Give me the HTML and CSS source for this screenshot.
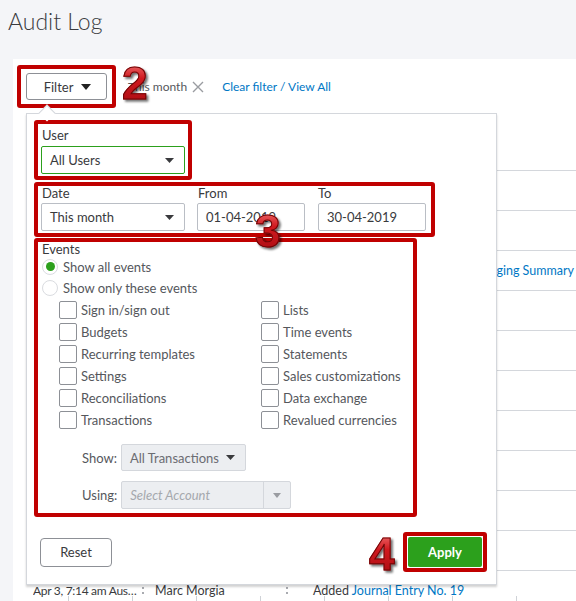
FILE: index.html
```html
<!DOCTYPE html>
<html lang="en">
<head>
<meta charset="utf-8">
<title>Audit Log</title>
<link rel="stylesheet" href="styles.css">
</head>
<body>
<div class="page">
  <header class="header">
    <h1 class="title">Audit Log</h1>
  </header>
  <main class="card">
    <div class="toolbar">
      <div class="mark mark-filter">
        <button class="btn filter-btn">Filter
          <svg class="caret" width="10" height="6" viewBox="0 0 10 6"><polygon points="0,0 10,0 5,6" fill="#222"/></svg>
        </button>
      </div>
      <span class="chip">This month
        <svg class="chip-x" width="12" height="12" viewBox="0 0 12 12"><path d="M1 1 L11 11 M11 1 L1 11" stroke="#9a9ca1" stroke-width="1.4" fill="none"/></svg>
      </span>
      <a class="link clear-link">Clear filter / View All</a>
    </div>

    <div class="table">
      <div class="thead"></div>
      <div class="row"></div>
      <div class="row"></div>
      <div class="row"><div class="cell cell-wide right"><span>Ran report <span class="link">A/R Aging Summary</span></span></div></div>
      <div class="row"></div>
      <div class="row"></div>
      <div class="row"></div>
      <div class="row"></div>
      <div class="row"></div>
      <div class="row"></div>
      <div class="row"></div>
      <div class="row row-last">
        <div class="cell c1"><span class="trunc">Apr 3, 7:14 am Australia/Sydney</span><span class="sep s1"></span></div>
        <div class="cell c2"><span>Marc Morgia</span><span class="sep s2"></span></div>
        <div class="cell c3"><span>Added <span class="link">Journal Entry No. 19</span></span></div>
      </div>
    </div>

    <section class="panel">
      <span class="panel-caret"></span>

      <div class="mark mark-user">
        <div class="label">User</div>
        <div class="select select-green">
          <span>All Users</span>
          <svg class="caret" width="9" height="5" viewBox="0 0 9 5"><polygon points="0,0 9,0 4.5,5" fill="#393a3d"/></svg>
        </div>
      </div>

      <div class="mark mark-date">
        <div class="date-row">
          <div class="field f-date">
            <div class="label">Date</div>
            <div class="select">
              <span>This month</span>
              <svg class="caret" width="9" height="5" viewBox="0 0 9 5"><polygon points="0,0 9,0 4.5,5" fill="#393a3d"/></svg>
            </div>
          </div>
          <div class="field f-from">
            <div class="label">From</div>
            <div class="input">01-04-2019</div>
          </div>
          <div class="field f-to">
            <div class="label">To</div>
            <div class="input">30-04-2019</div>
          </div>
        </div>
      </div>

      <div class="mark mark-events">
        <div class="label events-label">Events</div>
        <div class="radio-row"><span class="radio on"></span><span>Show all events</span></div>
        <div class="radio-row"><span class="radio"></span><span>Show only these events</span></div>
        <div class="checks">
          <div class="check"><span class="box"></span>Sign in/sign out</div>
          <div class="check"><span class="box"></span>Lists</div>
          <div class="check"><span class="box"></span>Budgets</div>
          <div class="check"><span class="box"></span>Time events</div>
          <div class="check"><span class="box"></span>Recurring templates</div>
          <div class="check"><span class="box"></span>Statements</div>
          <div class="check"><span class="box"></span>Settings</div>
          <div class="check"><span class="box"></span>Sales customizations</div>
          <div class="check"><span class="box"></span>Reconciliations</div>
          <div class="check"><span class="box"></span>Data exchange</div>
          <div class="check"><span class="box"></span>Transactions</div>
          <div class="check"><span class="box"></span>Revalued currencies</div>
        </div>
        <div class="opt-row opt-show">
          <span class="opt-label">Show:</span>
          <div class="gselect gs-show">
            <span>All Transactions</span>
            <svg class="caret" width="9" height="5" viewBox="0 0 9 5"><polygon points="0,0 9,0 4.5,5" fill="#393a3d"/></svg>
          </div>
        </div>
        <div class="opt-row opt-using">
          <span class="opt-label">Using:</span>
          <div class="gselect gs-using">
            <span class="placeholder">Select Account</span>
            <span class="gs-btn">
              <svg class="caret" width="8" height="5" viewBox="0 0 8 5"><polygon points="0,0 8,0 4,5" fill="#9a9ca1"/></svg>
            </span>
          </div>
        </div>
      </div>

      <div class="panel-foot">
        <button class="btn reset-btn">Reset</button>
        <div class="mark mark-apply">
          <button class="btn apply-btn">Apply</button>
        </div>
      </div>
    </section>

    <span class="num n2">2</span>
    <span class="num n3">3</span>
    <span class="num n4">4</span>
  </main>
</div>
</body>
</html>
```

FILE: styles.css
```css
html, body {
  margin: 0;
  padding: 0;
}
body {
  background: #f4f5f8;
  font-family: Lato, "Open Sans", sans-serif;
  font-size: 13px;
  color: #393a3d;
  overflow: hidden;
  width: 576px;
  height: 601px;
}
.page {
  display: flex;
  flex-direction: column;
  height: 601px;
}
.header {
  height: 59px;
  box-sizing: border-box;
  padding: 7px 0 0 8px;
}
.title {
  margin: 0;
  font-size: 23px;
  line-height: 28px;
  font-weight: 300;
  color: #393a3d;
}
.card {
  position: relative;
  flex: 1;
  margin-left: 13px;
  background: #fff;
  overflow: hidden;
}

/* annotation boxes */
.mark {
  border: 4px solid #c00000;
  border-radius: 3px;
  box-sizing: border-box;
}

.toolbar {
  display: flex;
  align-items: center;
  padding: 6px 0 0 4px;
  height: 49px;
  box-sizing: border-box;
}
.mark-filter {
  padding: 4px 5px;
}
.btn {
  font-family: inherit;
  font-size: 13px;
  cursor: pointer;
  box-sizing: border-box;
}
.filter-btn {
  width: 81px;
  height: 27px;
  border: 1px solid #8d9096;
  border-radius: 3px;
  background: #fff;
  color: #393a3d;
  display: flex;
  align-items: center;
  justify-content: center;
  gap: 8px;
  padding: 0 0 0 2px;
}
.chip {
  margin-left: 12px;
  display: flex;
  align-items: center;
  gap: 4px;
  font-size: 12px;
  color: #55575c;
}
.chip-x { margin-left: 1px; }
.link { color: #0077c5; text-decoration: none; }
.clear-link { margin-left: 18px; font-size: 12px; }

/* background table */
.table {
  margin-left: 13px;
  font-size: 12.5px;
}
.thead { height: 62px; }
.row {
  height: 40px;
  box-sizing: border-box;
  border-top: 1px solid #d4d7dc;
  display: flex;
  align-items: center;
  padding-left: 7px;
}
.cell { display: flex; align-items: center; white-space: nowrap; }
.cell-wide { flex: 1; }
.right { justify-content: flex-end; padding-right: 2px; }
.c1 { width: 122px; }
.c2 { width: 158px; }
.trunc {
  display: block;
  width: 106px;
  font-size: 12px;
  letter-spacing: -0.3px;
  overflow: hidden;
  text-overflow: ellipsis;
}
.sep {
  margin-left: auto;
  width: 0;
  height: 7px;
  border-left: 2px dotted #a9abb0;
}
.s1 { margin-right: 11px; }
.s2 { margin-right: 25px; }
.row-last {
  align-items: flex-start;
  padding-top: 12px;
  background: repeating-linear-gradient(90deg, transparent 0 42px, #cfd2d7 42px 43px, transparent 43px 64px) 0 25px / 100% 7px no-repeat;
}

/* filter panel */
.panel {
  position: absolute;
  left: 13px;
  top: 54px;
  width: 471px;
  box-sizing: border-box;
  background: #fff;
  border: 1px solid #d4d7dc;
  box-shadow: 0 2px 2px rgba(0, 0, 0, 0.18);
  padding: 6px 0 12px 7px;
  z-index: 2;
}
.panel-caret {
  position: absolute;
  top: -7px;
  left: 14px;
  width: 11px;
  height: 11px;
  background: #fff;
  border-left: 1px solid #d4d7dc;
  border-top: 1px solid #d4d7dc;
  transform: rotate(45deg);
}
.label {
  line-height: 16px;
  color: #393a3d;
}
.mark-user {
  width: 158px;
  padding: 3px 3px 2px 3px;
}
.mark-user .label { padding-left: 1px; margin-bottom: 3px; }
.select, .input {
  height: 28px;
  box-sizing: border-box;
  border: 1px solid #babec5;
  border-radius: 2px;
  display: flex;
  align-items: center;
  justify-content: space-between;
  padding: 0 10px 0 8px;
  color: #393a3d;
}
.select-green { border-color: #2ca01c; width: 144px; }
.mark-date {
  margin-top: 2px;
  width: 401px;
  padding: 0 5px 2px 3px;
}
.date-row {
  display: flex;
}
.field .label { line-height: 14px; margin-bottom: 3px; padding-left: 1px; }
.f-date { width: 144px; }
.f-from { width: 108px; margin-left: 12px; }
.f-to { width: 108px; margin-left: 13px; }
.f-to .label { padding-left: 0; }

.mark-events {
  margin-top: 1px;
  width: 383px;
  padding: 0 0 4px 0;
}
.events-label { line-height: 14px; padding-left: 4px; }
.radio-row {
  height: 21px;
  display: flex;
  align-items: center;
  padding-left: 4px;
  color: #55575c;
}
.radio {
  width: 16px;
  height: 16px;
  box-sizing: border-box;
  border: 1px solid #dadce0;
  border-radius: 50%;
  margin-right: 5px;
  display: flex;
  align-items: center;
  justify-content: center;
}
.radio.on::after {
  content: "";
  width: 9px;
  height: 9px;
  border-radius: 50%;
  background: #2ca01c;
}
.checks {
  margin-top: 1px;
  padding-left: 21px;
  display: grid;
  grid-template-columns: 202px auto;
}
.check {
  height: 22px;
  display: flex;
  align-items: center;
  color: #55575c;
}
.box {
  width: 18px;
  height: 18px;
  box-sizing: border-box;
  border: 1px solid #8d9096;
  border-radius: 2px;
  margin-right: 4px;
}
.opt-row {
  display: flex;
  align-items: center;
  padding-left: 44px;
}
.opt-show { margin-top: 13px; }
.opt-using { margin-top: 10px; }
.opt-label { color: #55575c; margin-right: 4px; }
.gselect {
  box-sizing: border-box;
  background: #eceef1;
  border: 1px solid #d4d7dc;
  border-radius: 2px;
  display: flex;
  align-items: center;
  justify-content: space-between;
}
.gs-show {
  width: 125px;
  height: 27px;
  padding: 0 10px 0 8px;
  color: #6b6c72;
}
.gs-using {
  width: 170px;
  height: 28px;
  padding: 0 0 0 8px;
}
.placeholder { font-style: italic; color: #a5a8ad; }
.gs-btn {
  width: 26px;
  height: 100%;
  border-left: 1px solid #d4d7dc;
  display: flex;
  align-items: center;
  justify-content: center;
}

.panel-foot {
  margin-top: 15px;
  display: flex;
  align-items: center;
  justify-content: space-between;
  padding: 0 9px 0 6px;
}
.reset-btn {
  width: 72px;
  height: 29px;
  border: 1px solid #8d9096;
  border-radius: 4px;
  background: #fff;
  color: #393a3d;
}
.mark-apply { padding: 1px; }
.apply-btn {
  width: 74px;
  height: 30px;
  border: none;
  border-radius: 2px;
  background: #2ca01c;
  color: #fff;
  font-weight: 700;
}

/* callout numerals overlaying the screenshot */
.num {
  position: absolute;
  z-index: 3;
  font-family: "Liberation Sans", Arial, sans-serif;
  font-weight: 700;
  font-size: 46px;
  line-height: 46px;
  background: linear-gradient(180deg, #f27a7a 0%, #d1191f 40%, #a80c12 100%);
  -webkit-background-clip: text;
  background-clip: text;
  color: transparent;
  -webkit-text-stroke: 1px #6e0505;
  filter: drop-shadow(2px 2px 1px rgba(0, 0, 0, 0.55));
}
.n2 { top: 1px; left: 109px; }
.n3 { top: 149px; left: 242px; }
.n4 { top: 472px; left: 356px; }
```
